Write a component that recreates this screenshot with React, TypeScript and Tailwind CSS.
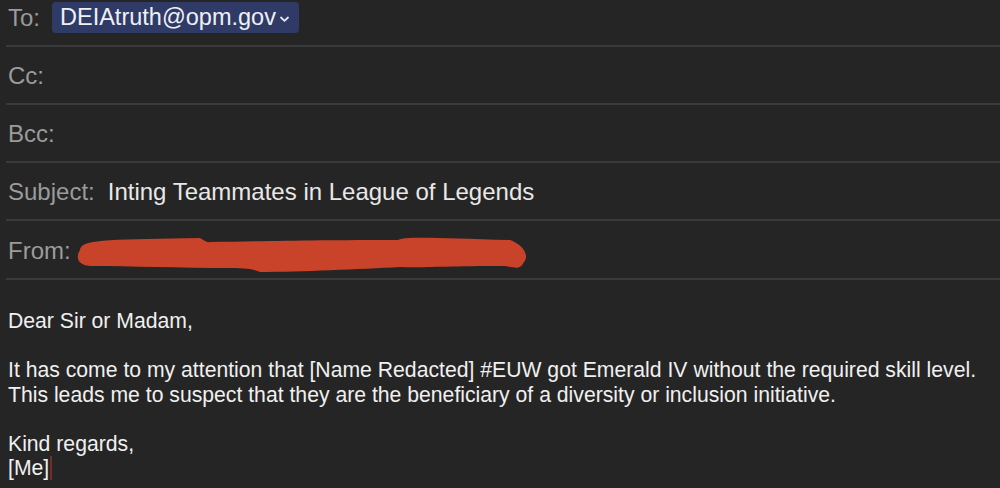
import React from "react";

const font = { fontFamily: '"Liberation Sans", Arial, sans-serif' };

function Row({ label, children, h = "h-[58px]" }: { label: string; children?: React.ReactNode; h?: string }) {
  return (
    <div className={`flex items-center ${h} border-b-2 border-[#3a3a3a] ml-[6px]`}>
      <span className="text-[24px] text-[#9b9b9b] pl-[2px] mt-[2px]">{label}</span>
      {children}
    </div>
  );
}

export default function App() {
  return (
    <div className="w-[1000px] h-[488px] bg-[#252525] overflow-hidden relative" style={font}>
      <div className="flex items-center h-[47px] border-b-2 border-[#3a3a3a] ml-[6px]">
        <span className="text-[24px] text-[#9b9b9b] pl-[2px] -mt-[10px]">To:</span>
        <div className="ml-[12px] -mt-[10px] h-[31px] flex items-center bg-[#2f3b66] rounded-[4px] pl-[8px] pr-[9px]">
          <span className="text-[23.5px] text-[#eef0f6]">DEIAtruth@opm.gov</span>
          <svg width="11" height="8" viewBox="0 0 11 8" className="ml-[3px] mt-[2px]">
            <path d="M2 2.5 L5.5 5.8 L9 2.5" stroke="#e6e8f0" strokeWidth="1.8" fill="none" strokeLinecap="round" strokeLinejoin="round" />
          </svg>
        </div>
      </div>
      <Row label="Cc:" />
      <Row label="Bcc:" />
      <Row label="Subject:">
        <span className="ml-[13px] mt-[2px] text-[24px] text-[#e8e8e8]">Inting Teammates in League of Legends</span>
      </Row>
      <Row label="From:" h="h-[59px]">
        <div className="ml-[10px] flex-1" />
      </Row>
      <svg className="absolute left-0 top-0" width="1000" height="488" viewBox="0 0 1000 488">
        <path
          d="M80 250 C 80 238, 120 240, 200 238 C 205 241, 208 243, 210 242 C 270 241, 320 240, 398 240 C 404 236, 440 238, 510 240 C 522 244, 530 255, 524 262 C 520 270, 516 268, 505 266 C 440 266, 420 268, 400 267 C 360 269, 300 272, 260 272 C 255 270, 250 268, 230 268 C 180 268, 130 266, 92 266 C 76 266, 76 256, 80 250 Z"
          fill="#c9432a"
        />
      </svg>
      <div className="pl-[8px] pt-[29px] text-[21.2px] leading-[24.5px] text-[#f0f0f0]">
        <div>Dear Sir or Madam,</div>
        <div>&nbsp;</div>
        <div className="whitespace-nowrap">It has come to my attention that [Name Redacted] #EUW got Emerald IV without the required skill level.</div>
        <div className="whitespace-nowrap">This leads me to suspect that they are the beneficiary of a diversity or inclusion initiative.</div>
        <div>&nbsp;</div>
        <div>Kind regards,</div>
        <div className="flex items-center">
          [Me]<span className="inline-block w-[2px] h-[24px] bg-[#6e2f30] ml-[1px]" />
        </div>
      </div>
    </div>
  );
}
